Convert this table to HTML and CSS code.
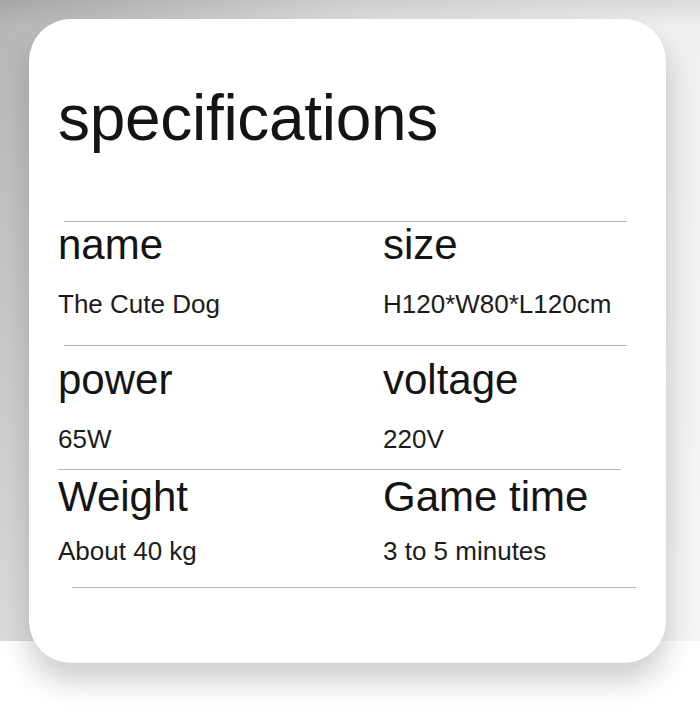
FILE: index.html
```html
<!DOCTYPE html>
<html lang="en">
<head>
<meta charset="utf-8">
<title>specifications</title>
<link rel="stylesheet" href="styles.css">
</head>
<body>
  <main class="page">
    <section class="card">
      <h1 class="title">specifications</h1>

      <hr class="rule rule--a">
      <div class="row row--1">
        <div class="cell">
          <div class="label">name</div>
          <div class="value">The Cute Dog</div>
        </div>
        <div class="cell">
          <div class="label">size</div>
          <div class="value">H120*W80*L120cm</div>
        </div>
      </div>

      <hr class="rule rule--a">
      <div class="row row--2">
        <div class="cell">
          <div class="label">power</div>
          <div class="value">65W</div>
        </div>
        <div class="cell">
          <div class="label">voltage</div>
          <div class="value">220V</div>
        </div>
      </div>

      <hr class="rule rule--b">
      <div class="row row--3">
        <div class="cell">
          <div class="label">Weight</div>
          <div class="value">About 40 kg</div>
        </div>
        <div class="cell">
          <div class="label">Game time</div>
          <div class="value">3 to 5 minutes</div>
        </div>
      </div>

      <hr class="rule rule--c">
    </section>
  </main>
</body>
</html>
```

FILE: styles.css
```css
* {
  box-sizing: border-box;
}

html,
body {
  margin: 0;
  padding: 0;
}

body {
  width: 700px;
  height: 718px;
  overflow: hidden;
  font-family: "Liberation Sans", Arial, sans-serif;
  color: #161616;
  background:
    linear-gradient(to bottom, rgba(0, 0, 0, 0.09), rgba(0, 0, 0, 0) 26px) top left / 100% 641px no-repeat,
    linear-gradient(115deg, #b5b5b5 0%, #e0e0e0 35%, #ededed 60%, #f5f5f5 100%) top left / 100% 641px no-repeat,
    #ffffff;
}

.page {
  padding: 19px 34px 0 29px;
}

.card {
  width: 637px;
  background: #ffffff;
  border-radius: 42px;
  padding: 67px 0 75px 0;
  box-shadow: 0 18px 30px rgba(0, 0, 0, 0.2);
}

.title {
  margin: 0 0 71px 0;
  padding-left: 29px;
  font-size: 64px;
  line-height: 64px;
  font-weight: 400;
  letter-spacing: -0.3px;
  color: #141414;
}

.rule {
  border: 0;
  height: 1px;
  background: #b6b6b6;
  margin: 0;
}

.rule--a {
  margin: 0 39px 0 35px;
}

.rule--b {
  margin: 0 45px 0 29px;
}

.rule--c {
  margin: 0 30px 0 43px;
}

.row {
  display: grid;
  grid-template-columns: 325px 1fr;
  padding-left: 29px;
}

.row--1 {
  padding-top: 2px;
  padding-bottom: 28px;
}

.row--2 {
  padding-top: 13px;
  padding-bottom: 17px;
}

.row--3 {
  padding-top: 6px;
  padding-bottom: 23px;
}

.cell {
  display: flex;
  flex-direction: column;
  gap: 25px;
}

.row--3 .cell {
  gap: 20px;
}

.label {
  font-size: 42px;
  line-height: 42px;
  color: #141414;
}

.value {
  font-size: 26px;
  line-height: 26px;
  color: #1c1c1c;
}
```
